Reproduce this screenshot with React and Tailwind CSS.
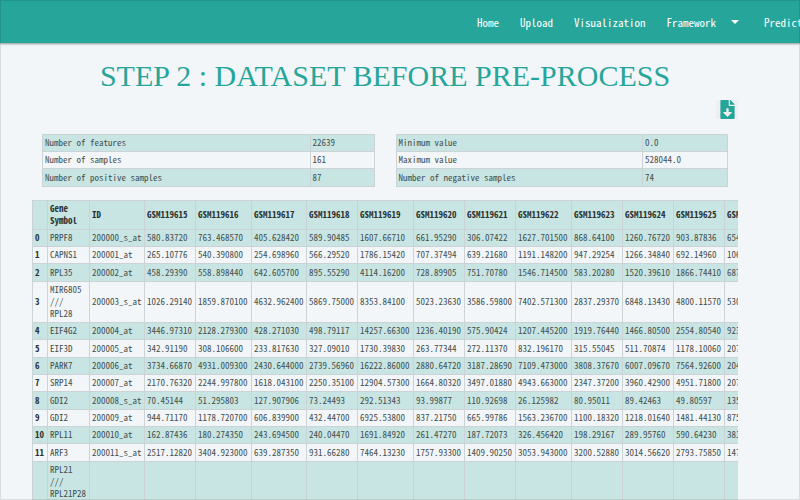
import { FaFileDownload } from "react-icons/fa";

const leftStats = [
  ["Number of features", "22639"],
  ["Number of samples", "161"],
  ["Number of positive samples", "87"],
];

const rightStats = [
  ["Minimum value", "0.0"],
  ["Maximum value", "528044.0"],
  ["Number of negative samples", "74"],
];

const samples = [
  "GSM119615", "GSM119616", "GSM119617", "GSM119618", "GSM119619", "GSM119620", "GSM119621",
  "GSM119622", "GSM119623", "GSM119624", "GSM119625", "GSM119626",
];

const rows = [
  ["PRPF8", "200000_s_at", "580.83720 763.468570 405.628420 589.90485 1607.66710 661.95290 306.07422 1627.701500 868.64100 1260.76720 903.87836 654"],
  ["CAPNS1", "200001_at", "265.10776 540.390800 254.698960 566.29520 1786.15420 707.37494 639.21680 1191.148200 947.29254 1266.34840 692.14960 106"],
  ["RPL35", "200002_at", "458.29390 558.898440 642.605700 895.55290 4114.16200 728.89905 751.70780 1546.714500 583.20280 1520.39610 1866.74410 687"],
  ["MIR6805 /// RPL28", "200003_s_at", "1026.29140 1859.870100 4632.962400 5869.75000 8353.84100 5023.23630 3586.59800 7402.571300 2837.29370 6848.13430 4800.11570 530"],
  ["EIF4G2", "200004_at", "3446.97310 2128.279300 428.271030 498.79117 14257.66300 1236.40190 575.90424 1207.445200 1919.76440 1466.80500 2554.80540 923"],
  ["EIF3D", "200005_at", "342.91190 308.106600 233.817630 327.09010 1730.39830 263.77344 272.11370 832.196170 315.55045 511.70874 1178.10060 207"],
  ["PARK7", "200006_at", "3734.66870 4931.009300 2430.644000 2739.56960 16222.86000 2880.64720 3187.28690 7109.473000 3808.37670 6007.09670 7564.92600 204"],
  ["SRP14", "200007_at", "2170.76320 2244.997800 1618.043100 2250.35100 12904.57300 1664.80320 3497.01880 4943.663000 2347.37200 3960.42900 4951.71800 207"],
  ["GDI2", "200008_s_at", "70.45144 51.295803 127.907906 73.24493 292.51343 93.99877 110.92698 26.125982 80.95011 89.42463 49.80597 135"],
  ["GDI2", "200009_at", "944.71170 1178.720700 606.839900 432.44700 6925.53800 837.21750 665.99786 1563.236700 1100.18320 1218.01640 1481.44130 875"],
  ["RPL11", "200010_at", "162.87436 180.274350 243.694500 240.04470 1691.84920 261.47270 187.72073 326.456420 198.29167 289.95760 590.64230 381"],
  ["ARF3", "200011_s_at", "2517.12820 3404.923000 639.287350 931.66280 7464.13230 1757.93300 1409.90250 3053.943000 3200.52880 3014.56620 2793.75850 147"],
];

const cell = "border border-[#ccd3d6] px-[2px] py-[2px]";

function StatsTable({ data, valueWidth }) {
  return (
    <table className="w-full flex-1 border-collapse text-left">
      <tbody>
        {data.map(([label, value]) => (
          <tr key={label} className="h-[17px] odd:bg-[#c8e5e3] nth-[3n]:h-[18px]">
            <th scope="row" className={`${cell} font-normal`}>{label}</th>
            <td className={`${cell} ${valueWidth}`}>{value}</td>
          </tr>
        ))}
      </tbody>
    </table>
  );
}

export default function App() {
  return (
    <div className="relative h-screen overflow-hidden bg-[#f2f6f9] font-['Noto_Sans_Mono_CJK_SC','DejaVu_Sans_Mono',monospace] text-[9px] leading-[12px] text-[#454f4f]">
      <header className="flex h-[43px] items-center bg-[#26a69a] pl-[58%] text-[11px] text-white shadow-[0_1px_2px_rgba(0,0,0,0.4)]">
        <nav className="flex items-center gap-[21px] whitespace-nowrap pl-[13px]">
          <a href="#">Home</a>
          <a href="#">Upload</a>
          <a href="#">Visualization</a>
          <a href="#" className="flex items-center gap-[15px]">
            Framework
            <svg viewBox="0 0 8 4" className="h-1 w-2" fill="currentColor" aria-hidden="true">
              <path d="M0 0h8L4 4z" />
            </svg>
          </a>
          <a href="#" className="pl-1">Prediction</a>
        </nav>
      </header>

      <main className="pl-8 pr-[62px]">
        <h1 className="pt-[15px] text-center font-['Liberation_Serif',serif] text-[30px] leading-[36px] text-[#26a69a]">
          STEP 2 : DATASET BEFORE PRE-PROCESS
        </h1>
        <div className="flex justify-end pt-[6px]">
          <button type="button" aria-label="Download dataset" className="flex w-[22px] justify-center bg-[#efefef] text-[#26a69a]">
            <FaFileDownload className="h-[19px] w-[15px]" />
          </button>
        </div>

        <section className="flex gap-[21px] px-[10px] pt-[15px]">
          <StatsTable data={leftStats} valueWidth="w-[64px]" />
          <StatsTable data={rightStats} valueWidth="w-[85px]" />
        </section>

        <div className="mt-[13px] overflow-hidden">
          <table className="w-[745px] table-fixed border-collapse text-left">
            <colgroup>
              <col className="w-[15px]" />
              <col className="w-[42px]" />
              <col className="w-[55px]" />
              <col className="w-[51px]" />
              <col className="w-[56px]" />
              <col className="w-[55px]" />
              <col className="w-[51px]" />
              <col className="w-[56px]" />
              <col className="w-[51px]" />
              <col className="w-[51px]" />
              <col className="w-[56px]" />
              <col className="w-[51px]" />
              <col className="w-[51px]" />
              <col className="w-[51px]" />
              <col />
            </colgroup>
            <thead>
              <tr className="bg-[#c8e5e3] text-[#2b3333]">
                <th className={cell}></th>
                <th scope="col" className={cell}>Gene Symbol</th>
                <th scope="col" className={cell}>ID</th>
                {samples.map((s) => (
                  <th key={s} scope="col" className={cell}>{s}</th>
                ))}
              </tr>
            </thead>
            <tbody>
              {rows.map(([gene, id, values], i) => (
                <tr key={id} className="h-[17px] odd:bg-[#c8e5e3] nth-[3n]:h-[18px]">
                  <th scope="row" className={`${cell} text-[#2b3333]`}>{i}</th>
                  <td className={cell}>{gene}</td>
                  <td className={cell}>{id}</td>
                  {values.split(" ").map((v, j) => (
                    <td key={j} className={cell}>{v}</td>
                  ))}
                </tr>
              ))}
              <tr className="h-[90px] bg-[#c8e5e3] align-top">
                <th className={cell}></th>
                <td className={cell}>RPL21 /// RPL21P28</td>
                <td className={cell}></td>
                {samples.map((s) => (
                  <td key={s} className={cell}></td>
                ))}
              </tr>
            </tbody>
          </table>
        </div>
      </main>
      <div className="pointer-events-none absolute inset-0 border border-black/10" />
    </div>
  );
}
